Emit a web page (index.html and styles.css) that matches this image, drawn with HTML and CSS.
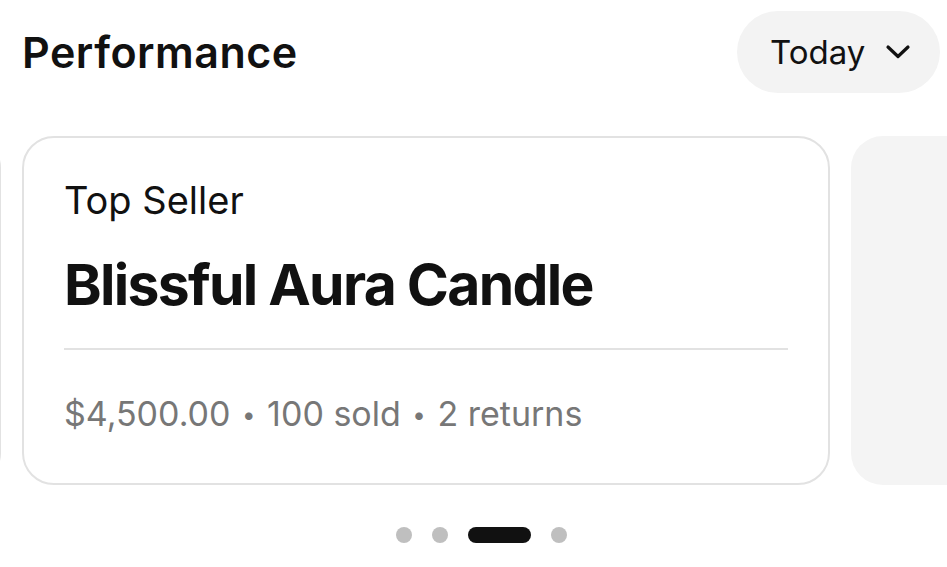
FILE: index.html
```html
<!doctype html>
<html lang="en">
  <head>
    <meta charset="utf-8" />
    <title>Performance</title>
    <link rel="stylesheet" href="styles.css">
  </head>
  <body>
    <div class="perf">
      <div class="perf-head">
        <h1>Performance</h1>
        <button class="range-btn">
          Today
          <svg width="26" height="16" viewBox="0 0 26 16" fill="none">
            <path d="M3 3 L13 12.5 L23 3" stroke="#111" stroke-width="3.2" stroke-linecap="round" stroke-linejoin="round"/>
          </svg>
        </button>
      </div>

      <div class="carousel">
        <div class="track">
          <div class="card card-prev"></div>

          <div class="card">
            <div class="card-label">Top Seller</div>
            <div class="card-title">Blissful Aura Candle</div>
            <hr class="card-rule">
            <div class="card-meta">$4,500.00 <span class="sep">&bull;</span> 100 sold <span class="sep">&bull;</span> 2 returns</div>
          </div>

          <div class="card card-next"></div>
        </div>
      </div>

      <div class="dots">
        <span class="dot"></span>
        <span class="dot"></span>
        <span class="dot active"></span>
        <span class="dot"></span>
      </div>
    </div>
  </body>
</html>
```

FILE: styles.css
```css
*{
  margin: 0;
  padding: 0;
  box-sizing: border-box;
}

body{
  font-family: 'Inter', 'Liberation Sans', sans-serif;
  background-color: white;
  color: #111111;
  width: 947px;
  height: 567px;
  overflow: hidden;
}

.perf-head{
  display: flex;
  justify-content: space-between;
  align-items: center;
  padding: 11px 7px 0 22px;
}

.perf-head h1{
  font-size: 43px;
  font-weight: 600;
  letter-spacing: 0.5px;
}

.range-btn{
  display: flex;
  align-items: center;
  gap: 20px;
  height: 82px;
  width: 203px;
  padding-left: 33px;
  border: none;
  border-radius: 41px;
  background-color: #f3f3f3;
  font-family: 'Inter', 'Liberation Sans', sans-serif;
  font-size: 33px;
  color: #111111;
}

.carousel{
  overflow: hidden;
  margin-top: 43px;
}

.track{
  display: flex;
  gap: 21px;
  margin-left: -807px;
}

.card{
  flex: 0 0 808px;
  height: 349px;
  border: 2px solid #e2e2e2;
  border-radius: 32px;
  padding: 40px 40px 0 40px;
}

.card-next{
  border: none;
  background-color: #f4f4f4;
}

.card-label{
  font-size: 38px;
  line-height: 44px;
}

.card-title{
  font-size: 57px;
  font-weight: 700;
  letter-spacing: -1.7px;
  line-height: 68px;
  margin-top: 29px;
}

.card-rule{
  border: none;
  height: 2px;
  background-color: #e2e2e2;
  margin-top: 29px;
}

.card-meta{
  font-size: 34px;
  color: #777777;
  margin-top: 43px;
}

.card-meta .sep{
  font-size: 24px;
  vertical-align: 3px;
  padding: 0 2px;
}

.dots{
  display: flex;
  justify-content: center;
  align-items: center;
  gap: 20px;
  margin-top: 42px;
  padding-left: 16px;
}

.dot{
  width: 16px;
  height: 16px;
  border-radius: 8px;
  background-color: #bfbfbf;
}

.dot.active{
  width: 63px;
  background-color: #111111;
}
```
